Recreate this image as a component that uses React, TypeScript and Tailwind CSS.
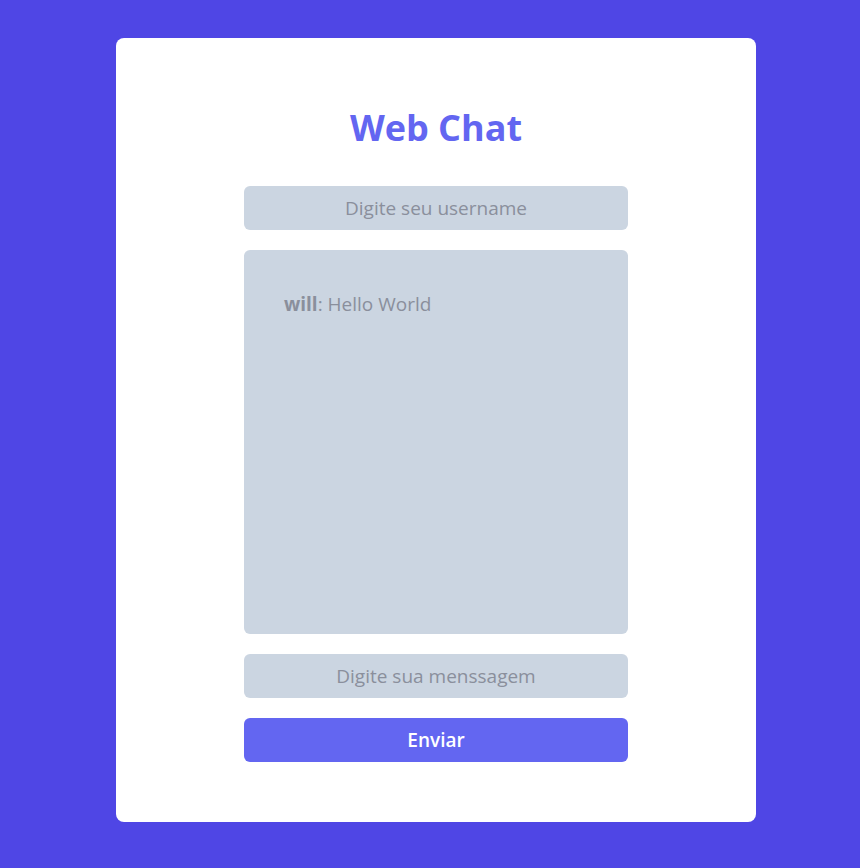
export default function App() {
  return (
    <div
      className="min-h-screen bg-[#4f46e5] pl-[116px] pt-[38px] pb-[46px]"
      style={{ fontFamily: '"Open Sans", "Noto Sans", sans-serif' }}
    >
      <div className="flex w-[640px] flex-col items-center rounded-lg bg-white pt-[70px] pb-[60px]">
        <h1 className="text-4xl leading-10 font-bold text-[#6366f1]">Web Chat</h1>

        <form className="mt-[38px] flex w-96 flex-col gap-5" onSubmit={(e) => e.preventDefault()}>
          <input
            className="h-11 w-full rounded-md bg-[#cbd5e1] text-center text-[19px] leading-7 text-[#6b7280] outline-none placeholder:text-[#8a8f9c]"
            placeholder="Digite seu username"
          />
          <div className="h-96 w-full rounded-md bg-[#cbd5e1] p-10 text-[19px] leading-7 text-[#8a8f9c]">
            <p>
              <strong className="font-bold">will</strong>: Hello World
            </p>
          </div>
          <input
            className="h-11 w-full rounded-md bg-[#cbd5e1] text-center text-[19px] leading-7 text-[#6b7280] outline-none placeholder:text-[#8a8f9c]"
            placeholder="Digite sua menssagem"
          />
          <button
            type="submit"
            className="h-11 w-full rounded-md bg-[#6366f1] text-[19px] leading-7 font-semibold text-white"
          >
            Enviar
          </button>
        </form>
      </div>
    </div>
  )
}
